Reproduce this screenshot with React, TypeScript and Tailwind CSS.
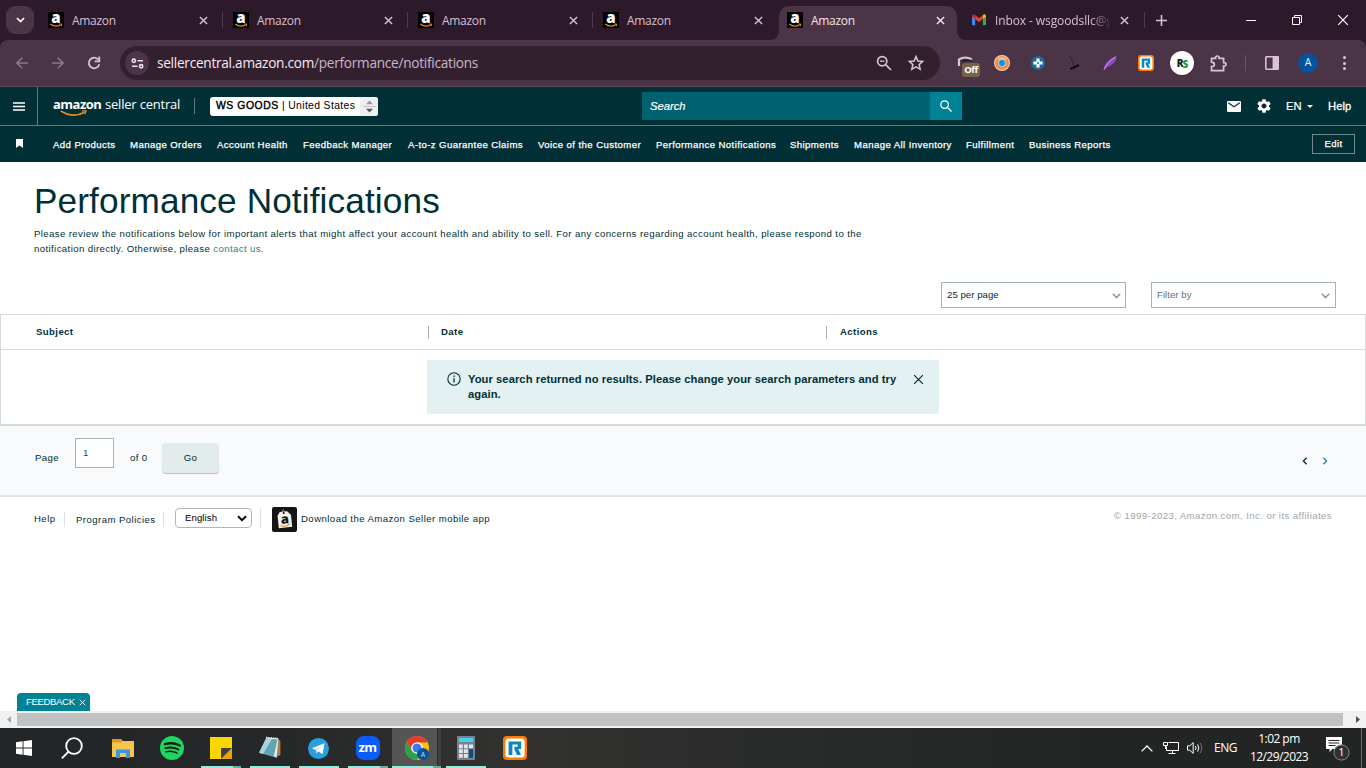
import type { ReactNode } from "react";
import clsx from "clsx";

const uiFont = "font-['Open_Sans','Noto_Sans',sans-serif]";
const pageFont = "font-['Liberation_Sans',Arial,sans-serif]";

const AmazonFavicon = () => (
  <span className="relative size-4 shrink-0 bg-black">
    <span className="absolute inset-x-0 -top-[5px] text-center text-[15px] leading-[20px] font-extrabold text-white">a</span>
    <svg viewBox="0 0 16 16" className="absolute inset-0 size-4" fill="none" stroke="#e88b1a">
      <path d="M2.2 12 Q7.5 16 12.6 12.8" strokeWidth="1.2" />
      <path d="M11.4 12.1 L13.8 12 L13.2 14.2" strokeWidth="1" />
    </svg>
  </span>
);

const GmailIcon = () => (
  <svg viewBox="0 0 14 12" className="w-[14px] h-3 shrink-0">
    <path d="M0 1.5 L3.2 4 V11.2 H1 Q0 11.2 0 10.2Z" fill="#4285f4" />
    <path d="M14 1.5 L10.8 4 V11.2 H13 Q14 11.2 14 10.2Z" fill="#34a853" />
    <path d="M10.8 1.3 Q12.2 -.3 13.4 .7 Q14 1.2 14 2.6 L10.8 5Z" fill="#fbbc04" />
    <path d="M3.2 1.3 Q1.8 -.3 .6 .7 Q0 1.2 0 2.6 L3.2 5Z" fill="#c5221f" />
    <path d="M3.2 1.3 L7 4.2 L10.8 1.3 V5 L7 8 L3.2 5Z" fill="#ea4335" />
  </svg>
);

const Cross = ({ className, width = 1.6 }: { className?: string; width?: number }) => (
  <svg viewBox="0 0 10 10" className={clsx("shrink-0", className)} fill="none" stroke="currentColor" strokeWidth={width}>
    <path d="M1 1 L9 9 M9 1 L1 9" />
  </svg>
);

const RIcon = ({ className }: { className?: string }) => (
  <svg viewBox="0 0 24 24" className={className}>
    <rect width="24" height="24" rx="4" fill="#ff7a00" />
    <rect x="2.4" y="2.4" width="19.2" height="19.2" rx="3" fill="#fff" />
    <path d="M5.6 5.4 H18.2 V13 H15.4 L18 19 H14 L11.4 13.4 V10.8 H14.6 V8.6 H9.4 V19 H5.6Z" fill="#0f86b5" />
  </svg>
);

const tabs = [
  { width: "w-[185px]", divider: true },
  { width: "w-[185px]", divider: true },
  { width: "w-[185px]", divider: true },
  { width: "w-[186px]", divider: false },
];

const TabStrip = () => (
  <div className="h-10 bg-[#2c1a2a] flex text-[#d9bfd4] text-[12px]">
    <div className="w-[38px] pt-1.5 pl-1.5">
      <div className="size-7 rounded-[9px] bg-[#4a3446] flex items-center justify-center text-white">
        <svg viewBox="0 0 10 6" className="w-[9px] h-[6px]" fill="none" stroke="currentColor" strokeWidth="1.8">
          <path d="M1 .8 L5 4.8 L9 .8" />
        </svg>
      </div>
    </div>
    {tabs.map((tab, i) => (
      <div key={i} className={clsx("flex items-center pl-[10px]", tab.width)}>
        <AmazonFavicon />
        <span className="ml-2 w-[126.5px] pt-px tracking-[-0.3px]">Amazon</span>
        <Cross className="size-[9px]" />
        {tab.divider && <span className="ml-[14.5px] w-px h-4 bg-[#503a4d]" />}
      </div>
    ))}
    <div className="relative mt-1.5 h-[34px] w-[178px] rounded-t-[10px] bg-[#4a3446] flex items-center pl-2 pb-1.5 text-[#f3e3f0]">
      <svg viewBox="0 0 10 10" className="absolute size-[10px] bottom-0 -left-[10px]">
        <path d="M10 0 Q10 10 0 10 H10Z" fill="#4a3446" />
      </svg>
      <svg viewBox="0 0 10 10" className="absolute size-[10px] bottom-0 -right-[10px]">
        <path d="M0 0 Q0 10 10 10 H0Z" fill="#4a3446" />
      </svg>
      <AmazonFavicon />
      <span className="ml-2 w-[125px] pt-px tracking-[-0.3px]">Amazon</span>
      <Cross className="size-[9px]" />
    </div>
    <div className="w-[187px] flex items-center pl-[15px]">
      <GmailIcon />
      <span className="ml-[9px] w-[120px] pt-px whitespace-nowrap text-[12px] tracking-[-0.1px] [mask-image:linear-gradient(to_right,#000_80%,transparent_97%)]">
        Inbox - wsgoodsllc@g
      </span>
      <Cross className="ml-[5px] size-[9px]" />
    </div>
    <span className="mt-3 w-px h-4 bg-[#503a4d]" />
    <div className="ml-[11px] w-2.5 flex items-center">
      <svg viewBox="0 0 11 11" className="size-[11px] shrink-0" stroke="currentColor" strokeWidth="1.6">
        <path d="M5.5 0 V11 M0 5.5 H11" />
      </svg>
    </div>
    <div className="ml-auto flex items-center text-white">
      <span className="flex w-[46px] justify-center"><span className="w-2.5 h-px bg-white" /></span>
      <span className="flex w-[46px] justify-center">
        <svg viewBox="0 0 10 10" className="size-[10px]" fill="none" stroke="currentColor">
          <path d="M.5 2.5 H7.5 V9.5 H.5Z M2.5 2.5 V.5 H9.5 V7.5 H7.5" />
        </svg>
      </span>
      <span className="flex w-[46px] justify-center"><Cross className="size-3" width={1} /></span>
    </div>
  </div>
);

const Ext = ({ children }: { children: ReactNode }) => (
  <div className="relative w-9 flex items-center justify-center">{children}</div>
);

const Arrow = ({ flip }: { flip?: boolean }) => (
  <svg viewBox="0 0 12 12" className={clsx("size-3", flip && "rotate-180")} fill="none" stroke="#8e7489" strokeWidth="1.6">
    <path d="M12 6 H1.2 M6.2 .8 L1 6 L6.2 11.2" />
  </svg>
);

const Toolbar = () => (
  <div className="bg-[#2c1a2a]">
    <div className="h-[47px] bg-[#4a3446] rounded-t-lg border-b border-[#5d4b59] flex items-center text-[#dcc2d7]">
      <div className="w-[120px] flex pl-1">
        <Ext><Arrow /></Ext>
        <Ext><Arrow flip /></Ext>
        <Ext>
          <svg viewBox="0 0 14 14" className="size-[14px]" fill="none" stroke="currentColor" strokeWidth="1.8">
            <path d="M11.4 3.8 A5.3 5.3 0 1 0 12.3 8.2" />
            <path d="M12.3 .6 V5.3 H7.6" />
          </svg>
        </Ext>
      </div>
      <div className="w-[820px] h-[34px] rounded-full bg-[#33202f] flex items-center pl-[5px]">
        <div className="size-6 rounded-full bg-[#4a3446] flex items-center justify-center">
          <svg viewBox="0 0 14 12" className="w-[13px] h-[11px]" fill="none" stroke="#f0dcec" strokeWidth="1.7">
            <circle cx="3" cy="3" r="1.8" />
            <path d="M7 3 H13 M1 9 H7" />
            <circle cx="11" cy="9" r="1.8" />
          </svg>
        </div>
        <span className="ml-2 text-[13.6px] tracking-[-0.25px] whitespace-nowrap text-[#c9b8c6]">
          <span className="text-[#f6eaf4]">sellercentral.amazon.com</span>/performance/notifications
        </span>
        <svg viewBox="0 0 16 16" className="ml-auto size-4" fill="none" stroke="currentColor" strokeWidth="1.7">
          <circle cx="6.2" cy="6.2" r="4.6" />
          <path d="M9.6 9.6 L15 15" />
          <path d="M4 6.2 H8.4" strokeWidth="1.3" />
        </svg>
        <svg viewBox="0 0 16 16" className="ml-4 mr-4 size-4" fill="none" stroke="currentColor" strokeWidth="1.5">
          <path d="M8 1.6 L9.9 6 L14.7 6.4 L11.1 9.6 L12.2 14.3 L8 11.8 L3.8 14.3 L4.9 9.6 L1.3 6.4 L6.1 6Z" />
        </svg>
      </div>
      <div className="ml-2 flex h-9">
        <Ext>
          <svg viewBox="0 0 18 14" className="w-[18px] h-[14px]" fill="none">
            <path d="M2 10 V3.4 Q8 -.4 15 3.4" stroke="#cfcfd2" strokeWidth="2.2" />
            <path d="M5 5.4 Q8 4 15 4.6" stroke="#25151f" strokeWidth="1.4" />
          </svg>
          <span className="absolute left-[14px] top-[18px] w-[18px] h-[14px] rounded-[3px] bg-[#7a6248] text-white text-[9.5px] leading-[14px] font-bold text-center tracking-[-0.4px]">
            Off
          </span>
        </Ext>
        <Ext>
          <svg viewBox="0 0 16 16" className="size-4">
            <circle cx="8" cy="8" r="8" fill="#fbd5b5" />
            <circle cx="8" cy="8" r="7" fill="#f08a44" />
            <path d="M3 4 A7 7 0 0 1 13 4 L8 8Z" fill="#f9b884" />
            <circle cx="8" cy="8" r="3.8" fill="#9adcf5" />
            <circle cx="8" cy="8" r="2.9" fill="#0a93e0" />
          </svg>
        </Ext>
        <Ext>
          <svg viewBox="0 0 14 14" className="size-[14px]">
            <circle cx="7" cy="7" r="7" fill="#20699c" />
            <path d="M5.4 2.4 H8.6 V5.4 H11.6 V8.6 H8.6 V11.6 H5.4 V8.6 H2.4 V5.4 H5.4Z" fill="#fff" />
            <circle cx="7" cy="7" r="1" fill="#20699c" />
          </svg>
        </Ext>
        <Ext>
          <svg viewBox="0 0 12 16" className="w-3 h-4" fill="none">
            <path d="M2 1 L6.5 11.5" stroke="#2b2026" strokeWidth="1" />
            <path d="M2.4 14.2 L11 10" stroke="#0c0a0c" strokeWidth="2" />
          </svg>
        </Ext>
        <Ext>
          <svg viewBox="0 0 14 16" className="w-[14px] h-4">
            <path d="M.6 15 Q1 6 13.4 .8 Q13.6 9 4 12.4 Q2 13.2 1.4 15Z" fill="#8c4cc0" />
            <path d="M1 14.6 Q4.6 7 12.4 2" fill="none" stroke="#cfa2ef" strokeWidth=".9" />
          </svg>
        </Ext>
        <Ext><RIcon className="size-4" /></Ext>
        <Ext>
          <span className="size-6 rounded-full bg-white shadow flex items-center justify-center text-[10px] font-extrabold tracking-[-1px] text-[#1b1b1b]">
            R<span className="text-[#1b9a4b] relative top-px">S</span>
          </span>
        </Ext>
        <Ext>
          <svg viewBox="0 0 17 17" className="size-[17px]" fill="none" stroke="currentColor" strokeWidth="1.7">
            <path d="M1.5 3.4 H5.6 Q5.4 1 7.3 1 Q9.2 1 9 3.4 H13.6 V7.6 Q16 7.4 16 9.3 Q16 11.2 13.6 11 V15.6 H1.5 V11.6 Q4.4 11.4 4.4 9.4 Q4.4 7.4 1.5 7.2Z" />
          </svg>
        </Ext>
        <span className="w-[18px] flex justify-center items-center"><span className="w-px h-4 bg-[#6b5468]" /></span>
        <Ext>
          <svg viewBox="0 0 14 14" className="size-[14px]" fill="none" stroke="currentColor" strokeWidth="1.6">
            <rect x=".8" y=".8" width="12.4" height="12.4" rx=".6" />
            <path d="M8.4 1 H13 V13 H8.4Z" fill="currentColor" />
          </svg>
        </Ext>
        <Ext>
          <span className="size-5 rounded-full bg-[#03549c] text-[#e8f1fa] text-[10.5px] flex items-center justify-center">A</span>
        </Ext>
        <Ext>
          <span className="flex flex-col gap-[2.5px]">
            <i className="size-[3px] rounded-full bg-current" />
            <i className="size-[3px] rounded-full bg-current" />
            <i className="size-[3px] rounded-full bg-current" />
          </span>
        </Ext>
      </div>
    </div>
  </div>
);

const SellerHeader = () => (
  <header className="h-[39px] bg-[#002f36] border-b border-[#5e7d80] flex items-center text-white">
    <div className="w-[38px] h-full border-r border-[#5e7d80] flex items-center justify-center">
      <svg viewBox="0 0 12 9" className="w-3 h-[9px]" stroke="#fff" strokeWidth="1.3">
        <path d="M0 1 H12 M0 4.5 H12 M0 8 H12" />
      </svg>
    </div>
    <div className="relative ml-[15px] w-[141px] pb-[5px] whitespace-nowrap font-['Open_Sans','Noto_Sans',sans-serif] text-[13px] leading-4">
      <span className="inline-block w-[52px] font-bold tracking-[-0.5px]">amazon</span>
      <span className="tracking-[-0.2px]">seller central</span>
      <svg viewBox="0 0 28 7" className="absolute left-[7px] top-[14px] w-7 h-[7px]" fill="none" stroke="#f08c1a">
        <path d="M.8 1 Q13 8.6 24.5 2.2" strokeWidth="1.6" />
        <path d="M22 .8 L26 .8 L24.8 4.4" strokeWidth="1.2" />
      </svg>
    </div>
    <span className="w-px h-4 bg-[#5e7d80]" />
    <div className="ml-[15px] w-[168px] h-[19px] rounded-[3px] bg-white text-black flex items-center justify-between overflow-hidden text-[10.4px]">
      <span className="pl-[6px] whitespace-nowrap">
        <span className="tracking-[0.55px] [-webkit-text-stroke:0.4px]">WS GOODS</span>
        <span className="tracking-[0.35px]"> | United States</span>
      </span>
      <span className="w-[18px] h-full bg-[#efefef] flex items-center justify-center">
        <svg viewBox="0 0 13 13" className="size-[13px]">
          <path d="M6.5 .6 L10 4.2 H3Z" fill="#9a9a9a" />
          <path d="M0 6.5 H13" stroke="#c4c4c4" />
          <path d="M6.5 12.4 L10 8.8 H3Z" fill="#555" />
        </svg>
      </span>
    </div>
    <div className="ml-[264px] w-72 h-7 bg-[#006170] flex items-center pl-2 text-[11.2px] italic [-webkit-text-stroke:0.2px]">Search</div>
    <div className="w-8 h-7 bg-[#008296] flex items-center justify-center">
      <svg viewBox="0 0 12 12" className="size-3" fill="none" stroke="#fff" strokeWidth="1.3">
        <circle cx="4.6" cy="4.6" r="3.8" />
        <path d="M7.4 7.4 L11.5 11.5" />
      </svg>
    </div>
    <svg viewBox="0 0 14 11" className="ml-[265px] w-[14px] h-[11px]">
      <rect width="14" height="11" rx="1" fill="#fff" />
      <path d="M1.2 1.8 L7 5.8 L12.8 1.8" fill="none" stroke="#002f36" strokeWidth="1.2" />
    </svg>
    <svg viewBox="2 2 20 20" className="ml-4 size-[14px]" fill="#fff">
      <path d="M19.14 12.94c.04-.3.06-.61.06-.94 0-.32-.02-.64-.07-.94l2.03-1.58a.49.49 0 0 0 .12-.61l-1.92-3.32a.488.488 0 0 0-.59-.22l-2.39.96c-.5-.38-1.03-.7-1.62-.94l-.36-2.54a.484.484 0 0 0-.48-.41h-3.84c-.24 0-.43.17-.47.41l-.36 2.54c-.59.24-1.13.57-1.62.94l-2.39-.96c-.22-.08-.47 0-.59.22L2.74 8.87c-.12.21-.08.47.12.61l2.03 1.58c-.05.3-.09.63-.09.94s.02.64.07.94l-2.03 1.58a.49.49 0 0 0-.12.61l1.92 3.32c.12.22.37.29.59.22l2.39-.96c.5.38 1.03.7 1.62.94l.36 2.54c.05.24.24.41.48.41h3.84c.24 0 .44-.17.47-.41l.36-2.54c.59-.24 1.13-.56 1.62-.94l2.39.96c.22.08.47 0 .59-.22l1.92-3.32c.12-.22.07-.47-.12-.61l-2.01-1.58zM12 15.6c-1.98 0-3.6-1.62-3.6-3.6s1.62-3.6 3.6-3.6 3.6 1.62 3.6 3.6-1.62 3.6-3.6 3.6z" />
    </svg>
    <span className="ml-[15px] w-[21px] text-[11.2px] [-webkit-text-stroke:0.2px]">EN</span>
    <svg viewBox="0 0 6 3" className="w-[6px] h-[3px]"><path d="M0 0 H6 L3 3Z" fill="#fff" /></svg>
    <span className="ml-[15px] text-[11.2px] tracking-[0.1px] [-webkit-text-stroke:0.3px]">Help</span>
  </header>
);

const navItems = [
  { label: "Add Products", width: "w-[77px]" },
  { label: "Manage Orders", width: "w-[87px]" },
  { label: "Account Health", width: "w-[86px]" },
  { label: "Feedback Manager", width: "w-[105px]" },
  { label: "A-to-z Guarantee Claims", width: "w-[130px]" },
  { label: "Voice of the Customer", width: "w-[118px]" },
  { label: "Performance Notifications", width: "w-[134px]" },
  { label: "Shipments", width: "w-[64px]" },
  { label: "Manage All Inventory", width: "w-[112px]" },
  { label: "Fulfillment", width: "w-[63px]" },
  { label: "Business Reports", width: "w-[100px]" },
];

const NavBar = () => (
  <nav className="h-9 bg-[#002f36] flex items-center text-white text-[9.6px] [-webkit-text-stroke:0.25px]">
    <svg viewBox="0 0 7 9" className="ml-4 mb-0.5 w-[7px] h-[9px]"><path d="M0 0 H7 V9 L3.5 6.6 L0 9Z" fill="#fff" /></svg>
    <div className="ml-[30px] flex whitespace-nowrap pt-0.5">
      {navItems.map((item) => (
        <a key={item.label} className={clsx("tracking-[0.41px]", item.width)}>{item.label}</a>
      ))}
    </div>
    <button className="ml-auto mr-[11px] w-[43px] h-5 border border-[#6f8a8d] tracking-[0.4px]">Edit</button>
  </nav>
);

const Chevron = ({ className }: { className?: string }) => (
  <svg viewBox="0 0 9 6" className={clsx("w-[9px] h-[6px]", className)} fill="none" stroke="#8a9a9c" strokeWidth="1.5">
    <path d="M.8 .8 L4.5 4.6 L8.2 .8" />
  </svg>
);

const Notifications = () => (
  <main className="text-[#002f36] text-[9.6px]">
    <div className="pl-[34px] pt-[18px]">
      <h1 className="text-[35.2px] leading-[42px] tracking-[0.12px]">Performance Notifications</h1>
      <p className="mt-1 leading-[15px] tracking-[0.397px] whitespace-nowrap">
        Please review the notifications below for important alerts that might affect your account health and ability to sell. For any concerns regarding account health, please respond to the
        <br />
        notification directly. Otherwise, please <a className="text-[#1a7f94]">contact us.</a>
      </p>
    </div>
    <div className="mt-[26px] mr-[30px] flex justify-end gap-[25px]">
      <div className="w-[185px] h-[26px] border border-[#a3b2b4] flex items-center pl-[5px] pr-1">
        <span className="tracking-[0.05px]">25 per page</span>
        <Chevron className="ml-auto mt-0.5" />
      </div>
      <div className="w-[185px] h-[26px] border border-[#a3b2b4] flex items-center pl-[5px] pr-[5px] text-[#5e7578]">
        <span className="tracking-[0.05px]">Filter by</span>
        <Chevron className="ml-auto mt-0.5" />
      </div>
    </div>
    <section className="mt-1.5 border border-b-2 border-[#d5dbdb] h-[112px]">
      <div className="h-[35px] border-b border-[#d5dbdb] flex items-center font-bold tracking-[0.4px]">
        <span className="w-[427px] pl-[35px]">Subject</span>
        <span className="w-[398px] h-[13px] border-l border-[#a3b2b4] pl-3 leading-[11px]">Date</span>
        <span className="h-[13px] border-l border-[#a3b2b4] pl-[13px] leading-[11px]">Actions</span>
      </div>
      <div className="mt-2.5 mx-auto w-[512px] h-[54px] bg-[#e3f1f2] flex pt-3 pl-5">
        <svg viewBox="0 0 14 14" className="size-[14px] shrink-0" fill="none" stroke="#002f36" strokeWidth="1.1">
          <circle cx="7" cy="7" r="6.2" />
          <path d="M7 6.2 V10.4 M7 3.6 V4.9" strokeWidth="1.3" />
        </svg>
        <p className="ml-[7px] w-[445px] text-[11.2px] leading-[15px] font-bold tracking-[0.065px] whitespace-nowrap">
          Your search returned no results. Please change your search parameters and try
          <br />
          again.
        </p>
        <Cross className="mt-0.5 size-[11px]" width={1.1} />
      </div>
    </section>
    <section className="h-[71px] bg-[#f9fafc] border-b-2 border-[#e2e5e7] flex pl-[35px] tracking-[0.4px]">
      <span className="w-10 mt-[25px]">Page</span>
      <span className="w-[39px] h-[30px] mt-3 border border-[#a3b2b4] bg-white pl-[7px] leading-[28px] text-[#00536b]">1</span>
      <span className="ml-4 w-8 mt-[25px]">of 0</span>
      <button className="mt-[17px] w-[57px] h-[30px] rounded-sm bg-[#e2ecec] shadow-[0_1px_1px_rgba(0,0,0,0.25)]">Go</button>
      <span className="ml-auto mr-[38px] mt-[31px] flex gap-[14px]">
        <svg viewBox="0 0 6 9" className="w-[6px] h-2" fill="none" stroke="#002f36" strokeWidth="1.5"><path d="M4.8 .8 L1.2 4.5 L4.8 8.2" /></svg>
        <svg viewBox="0 0 6 9" className="w-[6px] h-2" fill="none" stroke="#2a86a0" strokeWidth="1.5"><path d="M1.2 .8 L4.8 4.5 L1.2 8.2" /></svg>
      </span>
    </section>
  </main>
);

const Footer = () => (
  <footer className="pt-2.5 flex text-[9.6px] text-[#002f36] tracking-[0.44px] whitespace-nowrap">
    <div className="h-[25px] flex items-center pl-[34px]">
      <span className="w-[30px]">Help</span>
      <span className="w-[99px] h-[15px] leading-[15px] border-l border-[#e0e0e0] pl-[11px] -mt-px">Program Policies</span>
      <span className="w-3 h-[15px] border-l border-[#e0e0e0] -mt-px" />
      <span className="w-[77px] h-5 -mt-[3px] rounded-sm border border-[#b5b5b5] text-black flex items-center pl-[9px] pr-[4px] justify-between">
        <span className="pt-px tracking-[0.1px]">English</span>
        <svg viewBox="0 0 10 7" className="w-[10px] h-[7px]" fill="none" stroke="#000" strokeWidth="2"><path d="M1 1.2 L5 5.2 L9 1.2" /></svg>
      </span>
      <span className="ml-2 w-3 h-5 -mt-[3px] border-l border-[#e0e0e0]" />
      <svg viewBox="0 0 25 25" className="size-[25px] shrink-0">
        <rect width="25" height="25" rx="2" fill="#161414" />
        <g transform="rotate(-6 12.5 12.5)">
          <path d="M8.5 4.5 H16 L19.4 8.5 V20.5 H6 V8Z" fill="#f3f1ec" />
          <path d="M11 5 Q12 .6 13.6 5" fill="none" stroke="#aaa" strokeWidth=".8" />
          <circle cx="12.4" cy="6" r="1" fill="#161414" />
          <text x="12.9" y="16.6" textAnchor="middle" letterSpacing="0" fontFamily="Open Sans, sans-serif" fontWeight="800" fontSize="13" fill="#161414">a</text>
          <path d="M8 18 Q12.5 20.6 17.4 17.6" fill="none" stroke="#f0961e" strokeWidth="1.1" />
        </g>
      </svg>
      <span className="ml-1">Download the Amazon Seller mobile app</span>
    </div>
    <span className="ml-auto mr-[34px] mt-0.5 text-[#a3a3a3] tracking-[0.42px]">© 1999-2023, Amazon.com, Inc. or its affiliates</span>
  </footer>
);

const ScrollBar = () => (
  <div className="h-[17px] bg-[#f1f1f1] flex items-center justify-between">
    <span className="w-[17px] flex justify-center"><svg viewBox="0 0 4 7" className="w-1 h-[7px]"><path d="M4 0 V7 L0 3.5Z" fill="#a3a3a3" /></svg></span>
    <span className="w-[1326px] h-[13px] bg-[#c1c1c1]" />
    <span className="flex-1 flex justify-end pr-[6px]"><svg viewBox="0 0 4 7" className="w-1 h-[7px]"><path d="M0 0 V7 L4 3.5Z" fill="#505050" /></svg></span>
  </div>
);

const TaskButton = ({ children, running, stacked, active }: { children: ReactNode; running?: boolean; stacked?: boolean; active?: boolean }) => (
  <div className={clsx("relative w-[49px] h-10 flex items-center justify-center", active && "bg-[#555555]")}>
    {children}
    {running && (
      <span className={clsx("absolute bottom-0 h-0.5 flex", active ? "left-0 w-[49px]" : "left-[5px] w-10")}>
        <i className="flex-1 bg-[#93ecdc]" />
        {stacked && <i className="w-2 bg-[#6cada2]" />}
      </span>
    )}
    {active && <span className="absolute right-0 top-0 w-1 h-[38px] bg-[#3f3f3f] border-l border-[#2a2a2a]" />}
  </div>
);

const TaskBar = () => (
  <div className="h-10 bg-[linear-gradient(to_right,#232628,#252728_20%,#333230_38%,#2a2b2b_55%,#232525_80%)] flex items-center text-white">
    <div className="w-12 flex justify-center">
      <svg viewBox="0 0 16 16" className="size-4" fill="#fff">
        <path d="M0 2.2 L6.6 1.3 V7.5 H0Z M7.5 1.2 L16 0 V7.5 H7.5Z M0 8.4 H6.6 V14.7 L0 13.8Z M7.5 8.4 H16 V16 L7.5 14.8Z" />
      </svg>
    </div>
    <div className="w-[50px] flex justify-center pr-0.5">
      <svg viewBox="0 0 22 22" className="size-[22px]" fill="none" stroke="#fff" strokeWidth="1.8">
        <circle cx="13" cy="9" r="7.8" />
        <path d="M7.6 14.6 L.8 21.4" />
      </svg>
    </div>
    <TaskButton>
      <svg viewBox="0 0 22 19" className="w-[22px] h-[19px]">
        <path d="M0 0 H9 L10.5 2 H22 V18 H0Z" fill="#f6c64c" />
        <path d="M0 0 H9 L10 3.4 H0Z" fill="#e09a1a" />
        <path d="M4 10.5 H18 V19 H14 V14 H8 V19 H4Z" fill="#3d94e0" />
      </svg>
    </TaskButton>
    <TaskButton>
      <svg viewBox="0 0 24 24" className="size-6">
        <circle cx="12" cy="12" r="12" fill="#1ed760" />
        <g fill="none" stroke="#14201a" strokeLinecap="round">
          <path d="M4.8 8.2 Q13 5.8 19.8 9.6" strokeWidth="2.3" />
          <path d="M5.4 12.2 Q12.4 10.2 18.4 13.5" strokeWidth="1.9" />
          <path d="M6 15.8 Q12 14.2 17 17" strokeWidth="1.6" />
        </g>
      </svg>
    </TaskButton>
    <TaskButton running stacked>
      <svg viewBox="0 0 22 22" className="size-[22px]">
        <path d="M0 0 H22 V11 L11 22 H0Z" fill="#fdd600" />
        <path d="M11 11 H22 L11 22Z" fill="#404040" />
        <path d="M22 11 V22 H11Z" fill="#e6a800" />
      </svg>
    </TaskButton>
    <TaskButton running>
      <svg viewBox="0 0 24 24" className="size-6">
        <path d="M19 2 L22.4 5 V19 L18 21Z" fill="#a98346" />
        <path d="M8 1.4 L20.4 2.6 L18.6 22 L15 20Z" fill="#e4eef0" />
        <path d="M8 2.4 L19.6 3.4 L15.6 21 L1 16.8Z" fill="#5fa5b4" />
        <path d="M8 2.4 L14 3 L5 18 L1 16.8Z" fill="#a8d3da" />
        <path d="M8 1.4 L20 2.4" stroke="#f5f5f5" strokeWidth="1.4" strokeDasharray="1.3 1" />
      </svg>
    </TaskButton>
    <TaskButton running>
      <svg viewBox="0 0 22 22" className="size-[21px]">
        <circle cx="11" cy="11" r="11" fill="#29a0da" />
        <path d="M4 10.8 L17.4 5.4 L15.2 17 L10.9 14 L8.8 16.2 L8.2 12.6Z" fill="#fff" />
        <path d="M8.2 12.6 L14.8 8 L9.6 13.2 L8.8 16.2Z" fill="#b8d8ea" />
      </svg>
    </TaskButton>
    <TaskButton running stacked>
      <span className="size-6 rounded-lg bg-[#0b5cff] flex items-center justify-center font-bold text-[13px] leading-none tracking-[-0.6px] pb-0.5">zm</span>
    </TaskButton>
    <TaskButton running stacked active>
      <svg viewBox="0 0 24 24" className="size-6">
        <circle cx="12" cy="12" r="12" fill="#fbc116" />
        <path d="M12 6.4 H22.6 A12 12 0 0 0 1.6 6 L7.2 15Z" fill="#e33b2e" />
        <path d="M1.6 6 A12 12 0 0 0 12 24 L17 15 L7 14.8Z" fill="#2da04c" />
        <circle cx="12" cy="12" r="5.8" fill="#fff" />
        <circle cx="12" cy="12" r="4.5" fill="#3b7de8" />
        <circle cx="18" cy="18" r="6" fill="#08549a" />
        <text x="18" y="20.6" textAnchor="middle" fontSize="7" fill="#c8dcf0">A</text>
      </svg>
    </TaskButton>
    <TaskButton running>
      <svg viewBox="0 0 18 24" className="w-[18px] h-6">
        <rect width="18" height="24" rx="1" fill="#78828e" />
        <rect x="2" y="2" width="14" height="4" fill="#40d2f5" />
        <path d="M2 8.4h3.8v3.8H2z M7 8.4h3.8v3.8H7z M12 8.4h4v3.8h-4z M2 13.2h3.8v3.8H2z M7 13.2h3.8v3.8H7z M2 18h3.8v3.8H2z M7 18h3.8v3.8H7z" fill="#e4e7ea" />
        <path d="M12 13.2h4v8.6h-4z" fill="#0f4a8a" />
      </svg>
    </TaskButton>
    <TaskButton><RIcon className="size-6" /></TaskButton>
    <div className="ml-auto flex items-center h-10">
      <svg viewBox="0 0 12 7" className="w-3 h-[7px]" fill="none" stroke="#fff" strokeWidth="1.3"><path d="M.6 6.4 L6 1 L11.4 6.4" /></svg>
      <svg viewBox="0 0 17 14" className="ml-2.5 w-[17px] h-[14px]" fill="none" stroke="#fff">
        <path d="M5.5 1.5 H15.5 V9.5 H3.5 V5.5 M9.5 9.5 V12.5 M5.5 12.5 H12.5" />
        <path d="M.5 1.5 H4.5 V4.5 H.5Z M2.5 4.5 V8" />
      </svg>
      <svg viewBox="0 0 17 14" className="ml-[7px] w-[17px] h-[14px]" fill="none" stroke="#fff">
        <path d="M.5 4.8 H2.8 L6.2 1.6 V12.4 L2.8 9.2 H.5Z" />
        <path d="M8.4 5 Q9.8 7 8.4 9 M10.6 3.4 Q13 7 10.6 10.6" />
        <path d="M13 1.8 Q16.6 7 13 12.2" stroke="#777" />
      </svg>
      <span className="ml-[10px] w-[24px] text-[12px] tracking-[-0.5px]">ENG</span>
      <div className="ml-[8px] w-[66px] text-center text-[12px] leading-[18px] tracking-[-0.55px] whitespace-nowrap">
        1:02 pm
        <br />
        12/29/2023
      </div>
      <svg viewBox="0 0 24 24" className="ml-[13px] mr-[12px] size-6 overflow-visible">
        <path d="M1 1 H17 V13 H7.5 L4.6 16 V13 H1Z" fill="#fff" />
        <path d="M3.6 4.5 H14.4 M3.6 7 H14.4 M3.6 9.5 H10.5" stroke="#232525" />
        <circle cx="16.5" cy="16.5" r="7.6" fill="#2f3131" stroke="#8b8b8b" />
        <text x="16.5" y="20.4" textAnchor="middle" fontSize="11" fill="#fff">1</text>
      </svg>
      <span className="w-[5px] h-10 border-l border-[#6d6d6d]" />
    </div>
  </div>
);

export default function App() {
  return (
    <div className={clsx("w-[1366px] h-[768px] overflow-hidden bg-white flex flex-col", uiFont)}>
      <TabStrip />
      <Toolbar />
      <div className={clsx("flex-1 flex flex-col", pageFont)}>
        <SellerHeader />
        <NavBar />
        <Notifications />
        <Footer />
        <div className="mt-auto ml-[17px] w-[73px] h-[18px] rounded-t bg-[#008296] text-white text-[9.6px] flex items-center pl-[9px]">
          <span className="w-[53px] tracking-[-0.38px]">FEEDBACK</span>
          <Cross className="size-[7px]" width={1.3} />
        </div>
      </div>
      <ScrollBar />
      <TaskBar />
    </div>
  );
}
